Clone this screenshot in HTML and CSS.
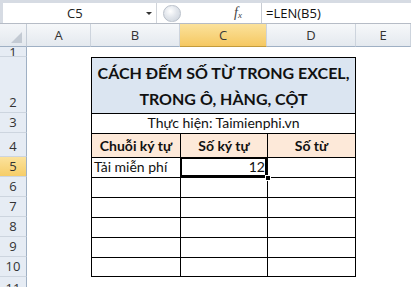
FILE: index.html
```html
<!DOCTYPE html>
<html lang="vi">
<head>
    <meta charset="UTF-8">
    <meta name="viewport" content="width=device-width, initial-scale=1.0">
    <title>Đếm số từ trong Excel</title>
    <link rel="stylesheet" href="styles.css">
</head>
<body>
    <div class="formula-bar">
        <div class="name-box">
            <span class="name">C5</span>
            <span class="arrow"></span>
        </div>
        <div class="splitter"><span class="pill"></span></div>
        <div class="fx">f<sub>x</sub></div>
        <div class="formula">=LEN(B5)</div>
    </div>

    <div class="sheet">
        <!-- column headers -->
        <div class="corner"><span class="tri"></span></div>
        <div class="col-head">A</div>
        <div class="col-head">B</div>
        <div class="col-head active">C</div>
        <div class="col-head">D</div>
        <div class="col-head">E</div>

        <!-- row 1 (scrolled) -->
        <div class="row-head cut-top">1</div>
        <div class="blank span5"></div>

        <!-- row 2 -->
        <div class="row-head">2</div>
        <div class="blank"></div>
        <div class="cell title span3">CÁCH ĐẾM SỐ TỪ TRONG EXCEL,<br>TRONG Ô, HÀNG, CỘT</div>
        <div class="blank"></div>

        <!-- row 3 -->
        <div class="row-head">3</div>
        <div class="blank"></div>
        <div class="cell author span3">Thực hiện: Taimienphi.vn</div>
        <div class="blank"></div>

        <!-- row 4 -->
        <div class="row-head">4</div>
        <div class="blank"></div>
        <div class="cell head">Chuỗi ký tự</div>
        <div class="cell head">Số ký tự</div>
        <div class="cell head last">Số từ</div>
        <div class="blank"></div>

        <!-- row 5 -->
        <div class="row-head active">5</div>
        <div class="blank"></div>
        <div class="cell">Tải miễn phí</div>
        <div class="cell num selected">12<span class="handle"></span></div>
        <div class="cell last"></div>
        <div class="blank"></div>

        <div class="row-head">6</div>
        <div class="blank"></div>
        <div class="cell"></div><div class="cell"></div><div class="cell last"></div>
        <div class="blank"></div>

        <div class="row-head">7</div>
        <div class="blank"></div>
        <div class="cell"></div><div class="cell"></div><div class="cell last"></div>
        <div class="blank"></div>

        <div class="row-head">8</div>
        <div class="blank"></div>
        <div class="cell"></div><div class="cell"></div><div class="cell last"></div>
        <div class="blank"></div>

        <div class="row-head">9</div>
        <div class="blank"></div>
        <div class="cell"></div><div class="cell"></div><div class="cell last"></div>
        <div class="blank"></div>

        <div class="row-head">10</div>
        <div class="blank"></div>
        <div class="cell bottom"></div><div class="cell bottom"></div><div class="cell last bottom"></div>
        <div class="blank"></div>

        <!-- row 11 (cut) -->
        <div class="row-head cut-bottom">11</div>
        <div class="blank span5"></div>
    </div>
</body>
</html>
```

FILE: styles.css
```css
* {
    box-sizing: border-box;
}

body {
    margin: 0;
    width: 411px;
    height: 287px;
    overflow: hidden;
    background-color: #ffffff;
    font-family: "Lato", "Open Sans", sans-serif;
    color: #111111;
}

/* formula bar */
.formula-bar {
    display: flex;
    height: 24px;
    border-top: 3px solid #d6dbe3;
    border-bottom: 1px solid #b6bcc6;
    background-color: #ffffff;
}

.name-box {
    width: 157px;
    display: flex;
    align-items: center;
    padding-left: 64px;
    border-left: 3px solid #d6dbe3;
    border-right: 1px solid #d0d4da;
    font-family: "Open Sans", sans-serif;
    font-size: 13px;
    color: #222222;
}

.name {
    flex: 1;
}

.arrow {
    width: 0;
    height: 0;
    margin-right: 4px;
    border-left: 3px solid transparent;
    border-right: 3px solid transparent;
    border-top: 3px solid #333333;
}

.splitter {
    width: 77px;
    display: flex;
    align-items: center;
    padding-left: 6px;
}

.pill {
    width: 18px;
    height: 17px;
    border-radius: 9px;
    border: 1px solid #b9c0ca;
    background: radial-gradient(circle at 40% 35%, #ffffff 0, #e2e6ec 45%, #c9d0d9 100%);
}

.fx {
    width: 28px;
    padding-right: 14px;
    border-right: 1px solid #c8ccd3;
    font-family: "Liberation Serif", serif;
    font-style: italic;
    font-size: 14px;
    line-height: 20px;
    color: #444444;
}

.fx sub {
    font-size: 9px;
    vertical-align: -1px;
}

.formula {
    flex: 1;
    padding-left: 4px;
    font-family: "Open Sans", sans-serif;
    font-size: 13px;
    line-height: 20px;
    color: #111111;
}

/* sheet grid */
.sheet {
    display: grid;
    grid-template-columns: 27px 64px 89px 87px 89px 55px;
    grid-template-rows: 23px 10px 56px 20px 24px repeat(6, 20px) 10px;
}

.span3 {
    grid-column: span 3;
}

.span5 {
    grid-column: span 5;
}

.corner {
    position: relative;
    background: linear-gradient(#f4f6f9, #e3e8ee);
    border-right: 1px solid #c4ccd6;
    border-bottom: 1px solid #9fb0c4;
}

.tri {
    position: absolute;
    right: 4px;
    bottom: 3px;
    width: 0;
    height: 0;
    border-left: 11px solid transparent;
    border-bottom: 11px solid #c3cad3;
}

.col-head {
    display: flex;
    align-items: center;
    justify-content: center;
    background: linear-gradient(#f6f8fa, #e4e9ef);
    border-right: 1px solid #cdd4dd;
    border-bottom: 1px solid #9fb0c4;
    font-family: "Open Sans", sans-serif;
    font-size: 13px;
    color: #333333;
}

.col-head.active {
    background: linear-gradient(#fbe29c, #f5c862);
    border-bottom-color: #c29b3c;
    color: #3a3a3a;
}

.row-head {
    display: flex;
    align-items: flex-end;
    justify-content: center;
    padding-bottom: 1px;
    background-color: #e6ecf4;
    border-right: 1px solid #9fb0c4;
    border-bottom: 1px solid #cdd5df;
    font-family: "Open Sans", sans-serif;
    font-size: 13px;
    line-height: 18px;
    color: #333333;
    overflow: hidden;
}

.row-head.active {
    background: linear-gradient(#fbe29c, #f6cd68);
}

.row-head.cut-top {
    align-items: flex-start;
    padding-bottom: 0;
    line-height: 10px;
}

.row-head.cut-bottom {
    align-items: flex-start;
    padding-top: 2px;
    border-bottom: none;
}

.blank {
    background-color: #ffffff;
}

/* table cells */
.cell {
    position: relative;
    padding: 0 2px;
    border-left: 1px solid #000000;
    border-top: 1px solid #000000;
    font-size: 14px;
    line-height: 18px;
    white-space: nowrap;
}

.cell.last,
.cell.span3 {
    border-right: 1px solid #000000;
}

.cell.bottom {
    border-bottom: 1px solid #000000;
}

.title {
    display: flex;
    align-items: center;
    justify-content: center;
    text-align: center;
    background-color: #dbe5f1;
    font-weight: bold;
    font-size: 16px;
    line-height: 26px;
    color: #111111;
}

.author {
    text-align: center;
}

.head {
    display: flex;
    align-items: center;
    justify-content: center;
    background-color: #fde9d9;
    font-weight: bold;
}

.num {
    text-align: right;
}

.selected {
    outline: 2px solid #000000;
    outline-offset: -2px;
    box-shadow: inset 0 0 0 3px #ffffff;
}

.handle {
    position: absolute;
    right: -4px;
    bottom: -4px;
    width: 6px;
    height: 6px;
    background-color: #000000;
    border: 1px solid #ffffff;
    z-index: 2;
}
```
